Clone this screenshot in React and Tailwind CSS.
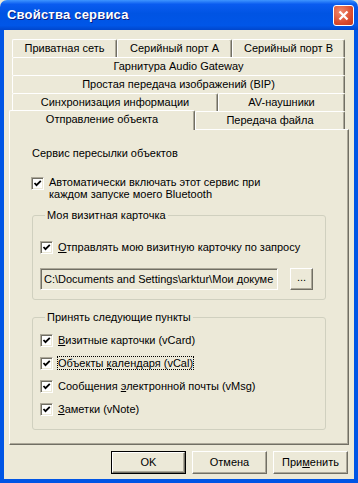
import React from "react";

/* ---------------- Piezas ---------------- */
function Tab({ children, className = "" }) {
  return (
    <div
      className={`h-full flex items-center justify-center bg-[#ece9d8] border-t border-l border-white border-r border-r-[#716f64] shadow-[inset_-1px_0_0_#aca899] rounded-t-[2px] ${className}`}
    >
      {children}
    </div>
  );
}

function Check() {
  return (
    <span className="w-[13px] h-[13px] shrink-0 flex items-center justify-center bg-white border border-t-[#aca899] border-l-[#aca899] border-r-white border-b-white shadow-[inset_1px_1px_0_#716f64,inset_-1px_-1px_0_#ece9d8]">
      <svg width="11" height="11" viewBox="0 0 11 11">
        <path d="M2.5 5 L4.5 7.2 L8.8 2.8" fill="none" stroke="#000" strokeWidth="1.8" />
      </svg>
    </span>
  );
}

function CheckRow({ children }) {
  return (
    <div className="flex items-center gap-[5px] h-[13px]">
      <Check />
      <span className="leading-[13px] whitespace-nowrap">{children}</span>
    </div>
  );
}

function Btn({ children, def }) {
  return (
    <div
      className={`w-[75px] h-[23px] flex items-center justify-center bg-[#ece9d8] ${
        def ? "border border-black" : ""
      }`}
    >
      <div className="w-full h-full flex items-center justify-center border-t border-l border-white border-r border-b border-r-[#716f64] border-b-[#716f64] shadow-[inset_-1px_-1px_0_#aca899]">
        {children}
      </div>
    </div>
  );
}

/* ---------------- Ventana ---------------- */
export default function App() {
  return (
    <div className="w-[358px] h-[483px] flex flex-col font-['Liberation_Sans',Arial,sans-serif] text-[11px] text-black bg-[#ece9d8]">
      {/* ---- Barra de título ---- */}
      <div className="h-[30px] shrink-0 flex items-center justify-between pl-[7px] pr-[4px] rounded-t-[7px] bg-[linear-gradient(to_bottom,#3f95ff_0%,#0a5cf0_14%,#0054e3_45%,#0056e8_85%,#0046cc_100%)]">
        <span className="text-white font-bold text-[13px] tracking-[0.2px] [text-shadow:1px_1px_0_#0a1e80]">
          Свойства сервиса
        </span>
        <div className="w-[21px] h-[21px] flex items-center justify-center rounded-[3px] border border-white bg-[radial-gradient(circle_at_35%_30%,#f08a6e,#d9492b_65%,#c03a20)]">
          <svg width="13" height="13" viewBox="0 0 13 13">
            <path d="M2.5 2.5 L10.5 10.5 M10.5 2.5 L2.5 10.5" stroke="#fff" strokeWidth="2.3" />
          </svg>
        </div>
      </div>

      {/* ---- Cuerpo ---- */}
      <div className="flex-1 flex flex-col border-l-4 border-r-4 border-b-4 border-[#0055e5] shadow-[inset_1px_0_0_#0831d9]">
        <div className="flex-1 flex flex-col bg-[#ece9d8] pl-[5px] pr-[5px]">
          {/* ---- Pestañas ---- */}
          <div className="mt-[9px] ml-[3px] w-[333px] flex flex-col">
            <div className="h-[18px] flex">
              <Tab className="w-[105px]">Приватная сеть</Tab>
              <Tab className="w-[115px]">Серийный порт A</Tab>
              <Tab className="w-[113px]">Серийный порт B</Tab>
            </div>
            <div className="h-[18px] flex">
              <Tab className="w-[333px]">Гарнитура Audio Gateway</Tab>
            </div>
            <div className="h-[18px] flex">
              <Tab className="w-[333px]">Простая передача изображений (BIP)</Tab>
            </div>
            <div className="h-[18px] flex">
              <Tab className="w-[206px]">Синхронизация информации</Tab>
              <Tab className="w-[127px]">AV-наушники</Tab>
            </div>
            <div className="h-[18px] flex items-end -ml-[3px]">
              <div className="relative z-10 w-[186px] h-[20px] -mb-px pb-[3px] flex items-center justify-center bg-[#ece9d8] border-t border-l border-white border-r border-r-[#716f64] shadow-[inset_-1px_0_0_#aca899] rounded-t-[2px]">
                Отправление объекта
              </div>
              <Tab className="w-[150px]">Передача файла</Tab>
            </div>
          </div>

          {/* ---- Panel ---- */}
          <div className="w-[340px] h-[316px] flex flex-col border-t border-l border-white border-r border-b border-r-[#716f64] border-b-[#716f64] shadow-[inset_-1px_-1px_0_#aca899] pl-[21px] pt-[17px]">
            <div className="ml-[1px] leading-[13px]">Сервис пересылки объектов</div>

            <div className="mt-[16px] flex items-start gap-[5px]">
              <span className="mt-[1px]">
                <Check />
              </span>
              <span className="leading-[12px]">
                Автоматически включать этот сервис при
                <br />
                каждом запуске моего Bluetooth
              </span>
            </div>

            {/* ---- Mi tarjeta ---- */}
            <fieldset className="mt-[9px] ml-[1px] w-[294px] border border-[#d0d0bf] rounded-[3px] pl-[7px] pb-[9px]">
              <legend className="ml-[5px] px-[2px] leading-[13px]">Моя визитная карточка</legend>
              <div className="mt-[19px]">
                <CheckRow>
                  <u>О</u>тправлять мою визитную карточку по запросу
                </CheckRow>
              </div>
              <div className="mt-[14px] flex items-center gap-[12px]">
                <div className="w-[238px] h-[22px] flex items-center pl-[3px] overflow-hidden whitespace-nowrap bg-[#ece9d8] border border-t-[#aca899] border-l-[#aca899] border-r-white border-b-white shadow-[inset_1px_1px_0_#716f64]">
                  C:\Documents and Settings\arktur\Мои докуме
                </div>
                <div className="w-[23px] h-[22px] flex items-center justify-center pb-[3px] border-t border-l border-white border-r border-b border-r-[#716f64] border-b-[#716f64] shadow-[inset_-1px_-1px_0_#aca899]">
                  ...
                </div>
              </div>
            </fieldset>

            {/* ---- Aceptar elementos ---- */}
            <fieldset className="mt-[11px] ml-[1px] w-[294px] border border-[#d0d0bf] rounded-[3px] pl-[7px] pb-[13px]">
              <legend className="ml-[5px] px-[2px] leading-[13px]">Принять следующие пункты</legend>
              <div className="mt-[10px] flex flex-col gap-[10px]">
                <CheckRow>
                  <u>В</u>изитные карточки (vCard)
                </CheckRow>
                <CheckRow>
                  <span className="outline outline-1 outline-dotted outline-black">
                    Объекты <u>к</u>алендаря (vCal)
                  </span>
                </CheckRow>
                <CheckRow>
                  Сообщения <u>э</u>лектронной почты (vMsg)
                </CheckRow>
                <CheckRow>
                  <u>З</u>аметки (vNote)
                </CheckRow>
              </div>
            </fieldset>
          </div>

          {/* ---- Botones ---- */}
          <div className="mt-[6px] flex justify-end gap-[6px] pr-[1px]">
            <Btn def>OK</Btn>
            <Btn>Отмена</Btn>
            <Btn>
              При<u>м</u>енить
            </Btn>
          </div>
        </div>
      </div>
    </div>
  );
}
